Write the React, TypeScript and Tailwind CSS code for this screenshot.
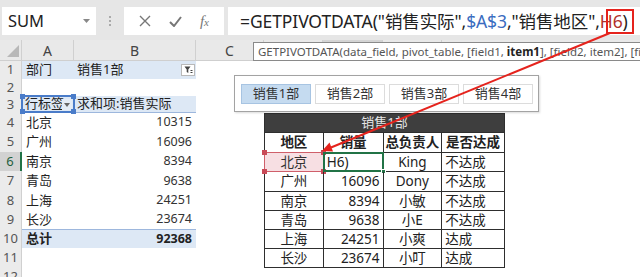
import React from "react";

const FONT = "font-['Noto_Sans','Noto_Sans_CJK_SC',sans-serif]";

const ROWS = [
  { n: 1, h: "h-[18px]" },
  { n: 2, h: "h-[17px]" },
  { n: 3, h: "h-[17px]" },
  { n: 4, h: "h-[19px]" },
  { n: 5, h: "h-[20px]" },
  { n: 6, h: "h-[19px]" },
  { n: 7, h: "h-[20px]" },
  { n: 8, h: "h-[19px]" },
  { n: 9, h: "h-[19px]" },
  { n: 10, h: "h-[19px]" },
  { n: 11, h: "h-[19px]" },
  { n: 12, h: "h-[19px]" },
];

const PIVOT: Record<number, [string, string]> = {
  4: ["北京", "10315"],
  5: ["广州", "16096"],
  6: ["南京", "8394"],
  7: ["青岛", "9638"],
  8: ["上海", "24251"],
  9: ["长沙", "23674"],
};

const SALES = [
  ["北京", "H6)", "King", "不达成"],
  ["广州", "16096", "Dony", "不达成"],
  ["南京", "8394", "小敏", "不达成"],
  ["青岛", "9638", "小E", "不达成"],
  ["上海", "24251", "小爽", "达成"],
  ["长沙", "23674", "小叮", "达成"],
];
const SALES_H = ["h-[19px]", "h-[20px]", "h-[19px]", "h-[19px]", "h-[19px]", "h-[19px]"];

function Handles({ color }: { color: string }) {
  return (
    <>
      <span className={`absolute -left-[3px] -top-[3px] w-[5px] h-[5px] ${color}`} />
      <span className={`absolute -right-[3px] -top-[3px] w-[5px] h-[5px] ${color}`} />
      <span className={`absolute -left-[3px] -bottom-[3px] w-[5px] h-[5px] ${color}`} />
      <span className={`absolute -right-[3px] -bottom-[3px] w-[5px] h-[5px] ${color}`} />
    </>
  );
}

function FilterButton() {
  return (
    <div className="ml-auto mr-[1px] w-[14px] h-[12px] bg-white border border-[#b9b9b9] flex items-center justify-center">
      <svg width="9" height="8" viewBox="0 0 9 8">
        <path d="M0.5 0.5h6l-2.2 3v3.5l-1.6-1V3.5z" fill="#444" />
        <path d="M6.5 4.5h2M6.5 6.5h2" stroke="#444" strokeWidth="1" />
      </svg>
    </div>
  );
}

function LeftRow({ n, h }: { n: number; h: string }) {
  const active = n === 6;
  const blue = n === 1 || n === 3 || n === 10;
  let a: React.ReactNode = null;
  let b: React.ReactNode = null;
  let extra = "";
  if (n === 1) {
    a = <span className="pl-[4px]">部门</span>;
    b = (
      <div className="flex items-center w-full">
        <span className="pl-[3px]">销售1部</span>
        <FilterButton />
      </div>
    );
  } else if (n === 3) {
    a = (
      <div className="relative w-full h-full flex items-center">
        <span className="pl-[3px] whitespace-nowrap overflow-hidden">行标签</span>
        <span className="absolute right-[2px] top-[3px] w-[10px] h-[11px] bg-[#e4ecf6] flex items-center justify-center">
          <svg width="6" height="4" viewBox="0 0 6 4">
            <path d="M0 0h6L3 4z" fill="#666" />
          </svg>
        </span>
        <span className="absolute -inset-[1px] border-2 border-[#4a7cc9]">
          <Handles color="bg-[#4a7cc9]" />
        </span>
      </div>
    );
    b = <span className="pl-[3px] whitespace-nowrap">求和项:销售实际</span>;
    extra = "border-b border-[#9db7dd]";
  } else if (PIVOT[n]) {
    a = <span className="pl-[4px]">{PIVOT[n][0]}</span>;
    b = <span className="ml-auto pr-[4px] text-[12.5px] text-[#333]">{PIVOT[n][1]}</span>;
  } else if (n === 10) {
    a = <span className="pl-[4px] font-semibold">总计</span>;
    b = <span className="ml-auto pr-[4px] text-[12.5px] font-bold">92368</span>;
    extra = "border-t border-[#9db7dd]";
  }
  return (
    <div className={`flex ${h} shrink-0`}>
      <div
        className={`w-[22px] shrink-0 flex items-center justify-center text-[13px] ${
          active ? "bg-[#d2d2d2] text-[#1f5f3c] border-r-2 border-[#217346]" : "bg-[#ebebeb] text-[#555] border-r border-[#d0d0d0]"
        }`}
      >
        {n}
      </div>
      <div className={`flex flex-1 ${blue ? "bg-[#dde8f5]" : "bg-white"} ${extra}`}>
        <div className="w-[52px] shrink-0 flex items-center">{a}</div>
        <div className="w-[122px] shrink-0 flex items-center">{b}</div>
      </div>
    </div>
  );
}

function SalesTable() {
  return (
    <div className="w-[241px] border-l border-t border-[#2e2e2e] text-[13.5px] text-[#222]">
      <div className="h-[19px] bg-[#3e3e3e] border-r border-b border-[#2e2e2e] flex items-center justify-center text-[#e6e6e6] text-[13px]">
        销售1部
      </div>
      <div className="h-[20px] flex border-b border-[#2e2e2e] font-bold">
        <div className="w-[59px] border-r border-[#2e2e2e] flex items-center justify-center">地区</div>
        <div className="w-[60px] border-r border-[#2e2e2e] flex items-center justify-center">销量</div>
        <div className="w-[59px] border-r border-[#2e2e2e] flex items-center justify-center whitespace-nowrap">总负责人</div>
        <div className="w-[63px] border-r border-[#2e2e2e] flex items-center justify-center whitespace-nowrap">是否达成</div>
      </div>
      {SALES.map((r, i) => (
        <div key={r[0]} className={`${SALES_H[i]} flex border-b border-[#2e2e2e]`}>
          <div
            className={`relative w-[59px] border-r border-[#2e2e2e] flex items-center justify-center ${
              i === 0 ? "bg-[#f7dfe3] text-[#333]" : ""
            }`}
          >
            {r[0]}
            {i === 0 && (
              <span className="absolute -inset-[1px] border border-[#cf5f6a]">
                <Handles color="bg-[#c94a57]" />
              </span>
            )}
          </div>
          <div
            className={`relative w-[60px] border-r border-[#2e2e2e] flex items-center ${
              i === 0 ? "justify-start pl-[3px]" : "justify-end pr-[3px]"
            }`}
          >
            {r[1]}
            {i === 0 && (
              <span className="absolute -inset-[1px] border-2 border-[#217346]">
                <span className="absolute -right-[4px] -bottom-[4px] w-[5px] h-[5px] bg-[#217346] border border-white" />
              </span>
            )}
          </div>
          <div className="w-[59px] border-r border-[#2e2e2e] flex items-center justify-center">{r[2]}</div>
          <div className="w-[63px] border-r border-[#2e2e2e] flex items-center pl-[3px]">{r[3]}</div>
        </div>
      ))}
    </div>
  );
}

export default function App() {
  return (
    <div className={`relative w-[640px] h-[277px] overflow-hidden bg-white text-[#222] ${FONT}`}>
      {/* formula bar */}
      <div className="h-[40px] bg-[#e6e6e6] flex items-start pt-[7px] pl-[2px]">
        <div className="w-[94px] h-[28px] bg-white flex items-center pl-[6px] pr-[6px]">
          <span className="text-[16.5px] text-[#222]">SUM</span>
          <svg className="ml-auto" width="7" height="4" viewBox="0 0 7 4">
            <path d="M0 0h7L3.5 4z" fill="#888" />
          </svg>
        </div>
        <div className="w-[28px] h-[28px] flex flex-col items-center justify-center gap-[2px]">
          <span className="w-[2px] h-[2px] bg-[#aaa]" />
          <span className="w-[2px] h-[2px] bg-[#aaa]" />
          <span className="w-[2px] h-[2px] bg-[#aaa]" />
        </div>
        <div className="w-[100px] h-[28px] bg-white flex items-center justify-around px-[6px]">
          <svg width="12" height="12" viewBox="0 0 12 12">
            <path d="M1 1l10 10M11 1L1 11" stroke="#777" strokeWidth="1.4" />
          </svg>
          <svg width="13" height="11" viewBox="0 0 13 11">
            <path d="M1 6l4 4 7-9" stroke="#777" strokeWidth="2" fill="none" />
          </svg>
          <span className="font-['Liberation_Serif',serif] italic text-[15px] text-[#777]">
            f<span className="text-[11px]">x</span>
          </span>
        </div>
        <div className="ml-[4px] flex-1 h-[28px] bg-white flex items-center pl-[12px] whitespace-nowrap text-[17.5px] tracking-[-0.1px] text-[#222]">
          <span>
            =GETPIVOTDATA("销售实际",<span className="text-[#3a6cc0]">$A$3</span>,"销售地区",
            <span className="text-[#b0302a]">H6</span>)
          </span>
        </div>
      </div>

      {/* column headers */}
      <div className="flex h-[21px] bg-[#e9e9e9] border-b border-[#cfcfcf] text-[14px] text-[#444]">
        <div className="w-[22px] shrink-0 border-r border-[#d0d0d0] flex items-end justify-end pb-[3px] pr-[2px]">
          <svg width="12" height="12" viewBox="0 0 12 12">
            <path d="M12 0v12H0z" fill="#b8b8b8" />
          </svg>
        </div>
        <div className="w-[52px] shrink-0 border-r border-[#d0d0d0] flex items-center justify-center">A</div>
        <div className="w-[122px] shrink-0 border-r border-[#d0d0d0] flex items-center justify-center">B</div>
        <div className="w-[68px] shrink-0 border-r border-[#d0d0d0] flex items-center justify-center">C</div>
        <div className="w-[59px] shrink-0 border-r border-[#d0d0d0]" />
        <div className="w-[60px] shrink-0 bg-[#d4d4d4] border-r border-[#d0d0d0]" />
        <div className="w-[59px] shrink-0 border-r border-[#d0d0d0]" />
        <div className="flex-1" />
      </div>

      {/* sheet */}
      <div className="flex text-[13px]">
        <div className="w-[196px] shrink-0 flex flex-col">
          {ROWS.map((r) => (
            <LeftRow key={r.n} n={r.n} h={r.h} />
          ))}
        </div>
        <div className="flex-1 pt-[52px] pl-[68px]">
          <SalesTable />
        </div>
      </div>

      {/* function tooltip */}
      <div className="absolute top-[42px] left-[253px] w-[400px] h-[19px] bg-white border border-[#8a8a8a] flex items-center pl-[4px] whitespace-nowrap text-[11.5px] text-[#555]">
        <span>
          GETPIVOTDATA(data_field, pivot_table, [field1, <b className="text-[#222]">item1</b>], [field2, item2], [field3,
          item3], ...)
        </span>
      </div>

      {/* slicer */}
      <div className="absolute top-[75px] left-[234px] w-[305px] h-[37px] bg-white border border-[#a3a3a3] shadow-[1px_1px_2px_rgba(0,0,0,0.15)] flex items-center gap-[4px] pl-[6px] text-[13px] text-[#333]">
        <div className="w-[70px] h-[20px] bg-[#c5dbf0] border border-[#a7c4e2] flex items-center justify-center">销售1部</div>
        <div className="w-[70px] h-[20px] bg-white border border-[#dcdcdc] flex items-center justify-center">销售2部</div>
        <div className="w-[70px] h-[20px] bg-white border border-[#dcdcdc] flex items-center justify-center">销售3部</div>
        <div className="w-[70px] h-[20px] bg-white border border-[#dcdcdc] flex items-center justify-center">销售4部</div>
      </div>

      {/* annotation */}
      <svg className="absolute inset-0 pointer-events-none" width="640" height="277">
        <rect x="607" y="10" width="26" height="23" fill="none" stroke="#e5231d" strokeWidth="2" />
        <line x1="610" y1="33" x2="331" y2="147.5" stroke="#e5231d" strokeWidth="2" />
        <polygon points="322,151 333,151.5 329.5,142.5" fill="#e5231d" />
      </svg>
    </div>
  );
}
